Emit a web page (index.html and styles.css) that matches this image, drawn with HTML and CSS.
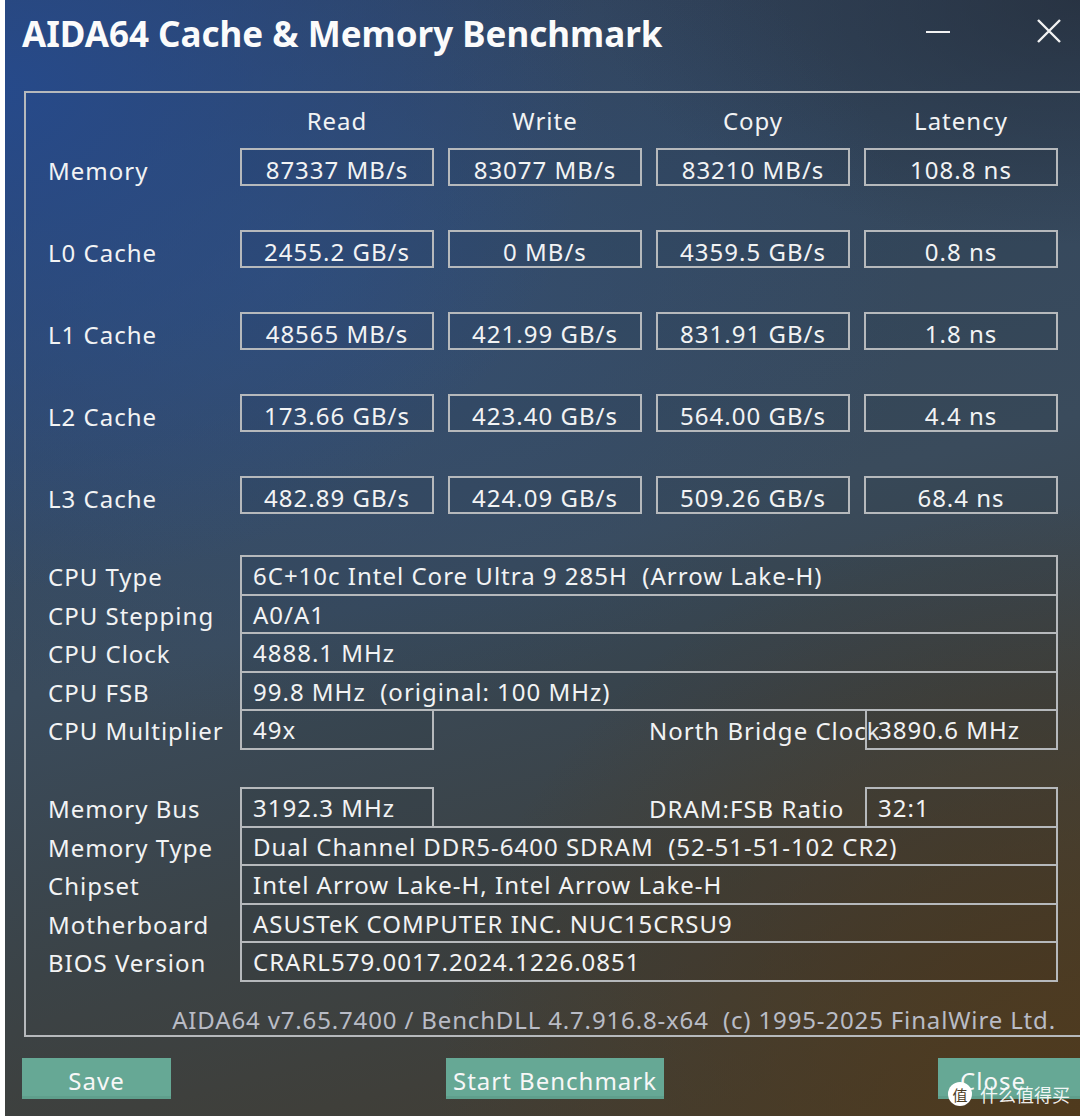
FILE: index.html
```html
<!DOCTYPE html>
<html>
	<head>
		<meta charset="utf-8" lang="en" />
		<title>AIDA64 Cache &amp; Memory Benchmark</title>
		<link rel="stylesheet" href="styles.css">
	</head>

	<body>
		<div class="window">
			<header class="titlebar">
				<h1>AIDA64 Cache &amp; Memory Benchmark</h1>
				<span class="btn-min"></span>
				<svg class="btn-close" width="26" height="26" viewBox="0 0 26 26">
					<path d="M2 2 L24 24 M24 2 L2 24" stroke="#f2f2f2" stroke-width="2.4" fill="none" />
				</svg>
			</header>

			<section class="frame">
				<div class="bench heads">
					<span></span>
					<span>Read</span>
					<span>Write</span>
					<span>Copy</span>
					<span>Latency</span>
				</div>

				<div class="bench rows">
					<span class="label">Memory</span>
					<span class="cell">87337 MB/s</span>
					<span class="cell">83077 MB/s</span>
					<span class="cell">83210 MB/s</span>
					<span class="cell">108.8 ns</span>

					<span class="label">L0 Cache</span>
					<span class="cell">2455.2 GB/s</span>
					<span class="cell">0 MB/s</span>
					<span class="cell">4359.5 GB/s</span>
					<span class="cell">0.8 ns</span>

					<span class="label">L1 Cache</span>
					<span class="cell">48565 MB/s</span>
					<span class="cell">421.99 GB/s</span>
					<span class="cell">831.91 GB/s</span>
					<span class="cell">1.8 ns</span>

					<span class="label">L2 Cache</span>
					<span class="cell">173.66 GB/s</span>
					<span class="cell">423.40 GB/s</span>
					<span class="cell">564.00 GB/s</span>
					<span class="cell">4.4 ns</span>

					<span class="label">L3 Cache</span>
					<span class="cell">482.89 GB/s</span>
					<span class="cell">424.09 GB/s</span>
					<span class="cell">509.26 GB/s</span>
					<span class="cell">68.4 ns</span>
				</div>

				<div class="info first">
					<div class="row">
						<span class="label">CPU Type</span>
						<span class="val">6C+10c Intel Core Ultra 9 285H  (Arrow Lake-H)</span>
					</div>
					<div class="row">
						<span class="label">CPU Stepping</span>
						<span class="val">A0/A1</span>
					</div>
					<div class="row">
						<span class="label">CPU Clock</span>
						<span class="val">4888.1 MHz</span>
					</div>
					<div class="row">
						<span class="label">CPU FSB</span>
						<span class="val">99.8 MHz  (original: 100 MHz)</span>
					</div>
					<div class="row split">
						<span class="label">CPU Multiplier</span>
						<span class="val">49x</span>
						<span class="label sub">North Bridge Clock</span>
						<span class="val">3890.6 MHz</span>
					</div>
				</div>

				<div class="info second">
					<div class="row split">
						<span class="label">Memory Bus</span>
						<span class="val">3192.3 MHz</span>
						<span class="label sub">DRAM:FSB Ratio</span>
						<span class="val">32:1</span>
					</div>
					<div class="row">
						<span class="label">Memory Type</span>
						<span class="val">Dual Channel DDR5-6400 SDRAM  (52-51-51-102 CR2)</span>
					</div>
					<div class="row">
						<span class="label">Chipset</span>
						<span class="val">Intel Arrow Lake-H, Intel Arrow Lake-H</span>
					</div>
					<div class="row">
						<span class="label">Motherboard</span>
						<span class="val">ASUSTeK COMPUTER INC. NUC15CRSU9</span>
					</div>
					<div class="row">
						<span class="label">BIOS Version</span>
						<span class="val">CRARL579.0017.2024.1226.0851</span>
					</div>
				</div>

				<p class="version">AIDA64 v7.65.7400 / BenchDLL 4.7.916.8-x64  (c) 1995-2025 FinalWire Ltd.</p>
			</section>

			<footer class="actions">
				<button class="save">Save</button>
				<button class="start">Start Benchmark</button>
				<button class="close">Close</button>
			</footer>

			<div class="mark"><span class="seal">值</span>什么值得买</div>
		</div>
	</body>
</html>
```

FILE: styles.css
```css
html,
body {
	height: 100%;
	overflow: hidden;
}
body {
	background: #fff;
	color: #f2f3f4;
	font-family: "Noto Sans", "Open Sans", sans-serif;
	font-size: 24px;
	letter-spacing: 1px;
	margin: 0;
	padding: 0 0 0 5px;
}
button {
	font-family: inherit;
	letter-spacing: inherit;
}


/* Window */
.window {
	background:
		radial-gradient(ellipse 55% 45% at 0% 8%, rgba(38, 74, 140, 0.95), rgba(38, 74, 140, 0) 100%),
		radial-gradient(ellipse 60% 40% at 25% 25%, rgba(52, 84, 130, 0.6), rgba(52, 84, 130, 0) 100%),
		radial-gradient(ellipse 45% 22% at 100% 0%, rgba(36, 44, 56, 0.7), rgba(36, 44, 56, 0) 100%),
		radial-gradient(ellipse 60% 55% at 100% 100%, rgba(80, 58, 28, 0.95), rgba(80, 58, 28, 0) 100%),
		linear-gradient(165deg, #2f3f58 0%, #33475e 25%, #3a4b5c 50%, #3b4347 70%, #433b2d 100%);
	height: 100%;
	overflow: hidden;
	position: relative;
}
.titlebar {
	align-items: flex-start;
	display: flex;
	height: 91px;
	padding-left: 17px;
}
.titlebar h1 {
	color: #fbfbfb;
	flex: 1;
	font-size: 35px;
	font-weight: 700;
	letter-spacing: 0;
	line-height: 48px;
	margin: 10px 0 0;
}
.btn-min {
	background: #f2f2f2;
	height: 2px;
	margin: 31px 86px 0 0;
	width: 24px;
}
.btn-close {
	margin: 18px 18px 0 0;
}


/* Framed panel */
.frame {
	border: 2px solid #b6b9bc;
	margin: 0 -30px 0 19px;
	padding: 14px 0 0 22px;
}
.bench {
	display: grid;
	grid-template-columns: 178px repeat(4, 194px);
	column-gap: 14px;
}
.heads {
	height: 28px;
	line-height: 28px;
	margin-bottom: 13px;
	text-align: center;
}
.rows {
	grid-auto-rows: 38px;
	row-gap: 44px;
}
.label {
	white-space: nowrap;
}
.rows .label {
	line-height: 38px;
	margin-top: 4px;
}
.cell {
	background: rgba(0, 0, 0, 0.04);
	border: 2px solid #b6b9bc;
	box-sizing: border-box;
	height: 38px;
	line-height: 30px;
	padding-top: 5px;
	text-align: center;
}


/* Info rows */
.info {
	width: 1010px;
}
.info.first {
	margin-top: 41px;
}
.info.second {
	margin-top: 37.5px;
}
.row {
	display: grid;
	grid-template-columns: 192px 818px;
	grid-template-rows: 40.5px;
	margin-top: -2px;
}
.row:first-child {
	margin-top: 0;
}
.row .label {
	line-height: 40px;
	padding-top: 2px;
}
.val {
	background: rgba(0, 0, 0, 0.04);
	border: 2px solid #b6b9bc;
	box-sizing: border-box;
	line-height: 36px;
	padding: 1px 0 0 11px;
	white-space: pre;
}
.split {
	grid-template-columns: 192px 194px 431px 193px;
}
.sub {
	padding-left: 215px;
}
.version {
	color: #b9bcc6;
	letter-spacing: 0.85px;
	line-height: 30px;
	margin: 23px 0 0;
	text-align: right;
	white-space: pre;
	width: 1008px;
}


/* Buttons */
.actions {
	display: flex;
	margin-top: 21px;
	padding-left: 17px;
}
.actions button {
	background: #66a895;
	border: 0;
	border-bottom: 3px solid #5f9f8c;
	color: #f7f7f7;
	flex-shrink: 0;
	font-size: 24px;
	height: 41px;
	line-height: 36px;
	padding: 5px 0 0;
}
.save {
	width: 149px;
}
.start {
	margin-left: 275px;
	width: 218px;
}
.close {
	margin-left: 274px;
	padding-right: 50px !important;
	width: 160px;
}

/* Site badge in the corner */
.mark {
	align-items: center;
	bottom: 9px;
	color: rgba(255, 255, 255, 0.92);
	display: flex;
	font-family: "Noto Sans CJK SC", sans-serif;
	font-size: 18px;
	gap: 8px;
	letter-spacing: 0;
	position: absolute;
	right: 10px;
}
.seal {
	align-items: center;
	background: #fff;
	border-radius: 50%;
	color: #4a3c24;
	display: flex;
	font-size: 15px;
	height: 24px;
	justify-content: center;
	width: 24px;
}
```
